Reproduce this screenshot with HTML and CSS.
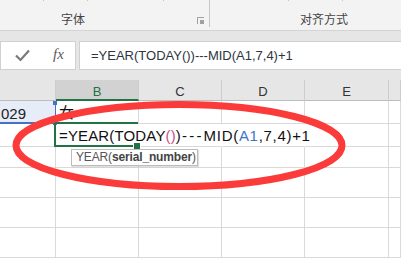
FILE: index.html
```html
<!DOCTYPE html>
<html lang="zh">
<head>
<meta charset="utf-8">
<title>Excel</title>
<link rel="stylesheet" href="styles.css">
</head>
<body>
<div class="app">
  <div class="ribbon">
    <div class="group g1">
      <div class="ticks"><span class="tk w44"></span><span class="tk w44"></span><span class="tk w76"></span></div>
      <div class="glabel gl1">
        <span class="label">字体</span>
        <svg class="launcher" width="8" height="8" viewBox="0 0 8 8"><path d="M0.5 7V0.5H7" fill="none" stroke="#a0a0a0" stroke-width="1"/><rect x="3" y="3" width="4" height="4" fill="#a0a0a0"/></svg>
      </div>
    </div>
    <div class="group g2">
      <div class="ticks"><span class="tk w79"></span><span class="tk w54"></span></div>
      <div class="glabel gl2"><span class="label">对齐方式</span></div>
    </div>
  </div>

  <div class="fbar">
    <div class="fbox cmds">
      <svg class="check" width="15" height="13" viewBox="0 0 15 13"><path d="M1 6.5L5.5 11L14 1.5" fill="none" stroke="#7a7a7a" stroke-width="2.2"/></svg>
      <span class="fx">fx</span>
    </div>
    <div class="fbox input">=YEAR(TODAY())---MID(A1,7,4)+1</div>
  </div>

  <div class="sheet">
    <div class="h"></div>
    <div class="h sel">B</div>
    <div class="h">C</div>
    <div class="h">D</div>
    <div class="h">E</div>
    <div class="h"></div>

    <div class="c ref"><span class="num">029</span></div>
    <div class="c cell-b1">女</div>
    <div class="c"></div>
    <div class="c"></div>
    <div class="c"></div>
    <div class="c"></div>

    <div class="c"></div>
    <div class="c active"><span class="edit">=YEAR(TODAY<span class="pk">()</span>)<span class="dash">---</span><span class="tail">MID(<span class="bl">A1</span>,7,4)+1</span></span></div>
    <div class="c nr"></div>
    <div class="c nr"></div>
    <div class="c"></div>
    <div class="c"></div>

    <div class="c"></div><div class="c"></div><div class="c"></div><div class="c"></div><div class="c"></div><div class="c"></div>
    <div class="c"></div><div class="c"></div><div class="c"></div><div class="c"></div><div class="c"></div><div class="c"></div>
    <div class="c"></div><div class="c"></div><div class="c"></div><div class="c"></div><div class="c"></div><div class="c"></div>
    <div class="c"></div><div class="c"></div><div class="c"></div><div class="c"></div><div class="c"></div><div class="c"></div>
  </div>

  <div class="tip">YEAR(<b>serial_number</b>)</div>

  <svg class="mark" width="401" height="258" viewBox="0 0 401 258">
    <ellipse cx="179" cy="145.5" rx="163" ry="41" fill="none" stroke="#fb3a3a" stroke-width="7"/>
  </svg>
</div>
</body>
</html>
```

FILE: styles.css
```css
* { box-sizing: border-box; }
html, body { margin: 0; padding: 0; background: #fff; }
.app {
  position: relative;
  width: 401px;
  height: 258px;
  overflow: hidden;
  font-family: "Liberation Sans", Arial, sans-serif;
}

/* ribbon */
.ribbon {
  display: flex;
  align-items: flex-start;
  height: 31px;
  background: #f3f3f3;
  border-bottom: 1px solid #d4d4d4;
}
.group { display: flex; flex-direction: column; height: 27px; }
.g1 { width: 210px; border-right: 1px solid #c6c6c6; }
.g2 { flex: 1; }
.ticks { display: flex; height: 4px; }
.tk { flex: none; border-right: 1px solid #c6c6c6; }
.w44 { width: 44px; }
.w76 { width: 76px; }
.w79 { width: 79px; }
.w54 { width: 54px; }
.glabel { display: flex; align-items: flex-start; padding-top: 10px; }
.gl1 { padding-left: 61px; }
.gl2 { padding-left: 90px; }
.label {
  font-family: "Noto Sans CJK SC", sans-serif;
  font-size: 12px;
  line-height: 16px;
  color: #444;
}
.launcher { margin-left: auto; margin-right: 4px; margin-top: 6px; }

/* formula bar */
.fbar {
  display: flex;
  gap: 3px;
  background: #e6e6e6;
  padding: 10px 0 10px 0;
}
.fbox {
  height: 29px;
  background: #fff;
  border: 1px solid #d0d0d0;
}
.cmds {
  width: 76px;
  display: flex;
  align-items: center;
  padding-left: 14px;
}
.check { margin-top: -1px; }
.fx {
  font-family: "Liberation Serif", serif;
  font-style: italic;
  font-size: 15px;
  color: #5a5a5a;
  margin-left: 23px;
  margin-top: -2px;
}
.input {
  flex: 1;
  border-right: none;
  padding-left: 11px;
  font-size: 13px;
  line-height: 27px;
  color: #2e3440;
  white-space: nowrap;
}

/* sheet */
.sheet {
  display: grid;
  grid-template-columns: 56px 83px 83px 83px 84px 1fr;
  grid-template-rows: 21px 23px 23px 21px 30px 30px 30px;
}
.h {
  background: #e6e6e6;
  border-right: 1px solid #cdcdcd;
  border-bottom: 1px solid #bdbdbd;
  display: flex;
  align-items: center;
  justify-content: center;
  padding-top: 3px;
  font-size: 13px;
  color: #333;
}
.h.sel {
  background: #d2d2d2;
  color: #217346;
  border-bottom: 2px solid #217346;
  padding-top: 4px;
}
.c {
  border-right: 1px solid #d9d9d9;
  border-bottom: 1px solid #d9d9d9;
  position: relative;
}
.c.nr { border-right-color: transparent; }
.ref {
  background: #e6edf8;
  border-right: 1px solid #4472c4;
  border-bottom: 2px solid #4472c4;
  display: flex;
  justify-content: flex-end;
  align-items: center;
  padding-right: 29px;
}
.ref::before, .ref::after {
  content: "";
  position: absolute;
  right: -2px;
  width: 4px;
  height: 4px;
  background: #4472c4;
}
.ref::before { top: 0; }
.ref::after { bottom: -3px; }
.num { font-size: 15px; color: #222; padding-top: 3px; }
.cell-b1 {
  font-family: "Noto Sans CJK SC", sans-serif;
  font-size: 15px;
  line-height: 22px;
  padding-left: 3px;
  color: #111;
}
.active {
  border-right-color: transparent;
  z-index: 2;
  display: flex;
  align-items: center;
}
.active::before {
  content: "";
  position: absolute;
  top: -2px;
  left: -2px;
  right: 0;
  bottom: -1px;
  border: 2px solid #217346;
  border-right: none;
}
.active::after {
  content: "";
  position: absolute;
  right: -3px;
  bottom: -4px;
  width: 6px;
  height: 6px;
  background: #217346;
  border: 1px solid #fff;
}
.edit {
  white-space: nowrap;
  font-size: 15px;
  letter-spacing: 0.15px;
  color: #111;
  padding-left: 3px;
}
.dash { letter-spacing: 2.2px; padding-left: 1px; }
.tail { letter-spacing: 0.7px; }
.pk { color: #c8508a; }
.bl { color: #3f73c5; }

/* overlays */
.tip {
  position: absolute;
  left: 71px;
  top: 149px;
  width: 127px;
  height: 17px;
  background: #fff;
  border: 1px solid #bcbcbc;
  box-shadow: 1px 1px 1px rgba(0,0,0,0.12);
  font-size: 12px;
  line-height: 15px;
  padding-left: 4px;
  color: #555;
  white-space: nowrap;
  letter-spacing: -0.15px;
  z-index: 3;
}
.tip b { color: #444; }
.mark {
  position: absolute;
  left: 0;
  top: 0;
  z-index: 5;
  pointer-events: none;
}
```
